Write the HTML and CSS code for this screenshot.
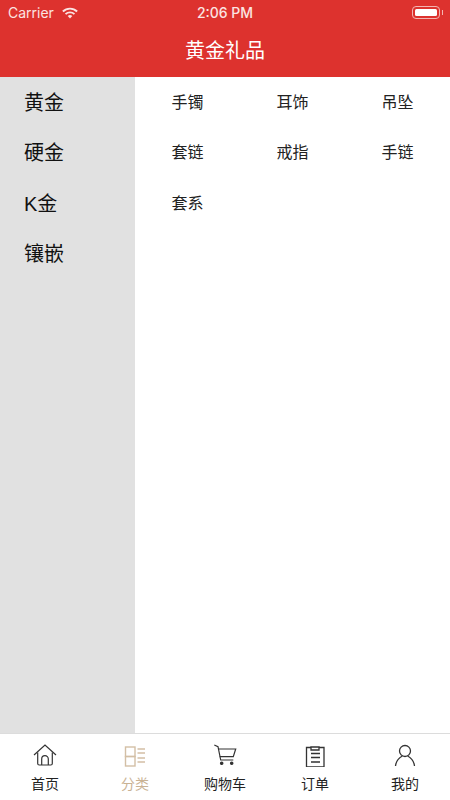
FILE: index.html
```html
<!DOCTYPE html>
<html lang="zh-CN">
<head>
  <meta charset="UTF-8" />
  <meta name="viewport" content="width=device-width, initial-scale=1.0" />
  <title>黄金礼品</title>
  <link rel="stylesheet" href="styles.css">
</head>
<body>
<div class="page">
  <header class="top">
    <div class="status">
      <div class="status__left">
        <span>Carrier</span>
        <svg class="status__wifi" viewBox="0 0 18 13" width="16" height="12">
          <path d="M1 4.8 A11.5 11.5 0 0 1 17 4.8" fill="none" stroke="#fbe4e2" stroke-width="2.2"/>
          <path d="M4 7.8 A7.3 7.3 0 0 1 14 7.8" fill="none" stroke="#fbe4e2" stroke-width="2.2"/>
          <path d="M6.4 10 A3.8 3.8 0 0 1 11.6 10 L9 12.8 Z" fill="#fbe4e2"/>
        </svg>
      </div>
      <div class="status__time">2:06 PM</div>
      <div class="status__right">
        <div class="battery"><div class="battery__fill"></div></div>
        <div class="battery__tip"></div>
      </div>
    </div>
    <h1 class="top__title">黄金礼品</h1>
  </header>

  <main class="main">
    <ul class="side">
      <li>黄金</li>
      <li>硬金</li>
      <li>K金</li>
      <li>镶嵌</li>
    </ul>
    <ul class="cats">
      <li>手镯</li>
      <li>耳饰</li>
      <li>吊坠</li>
      <li>套链</li>
      <li>戒指</li>
      <li>手链</li>
      <li>套系</li>
    </ul>
  </main>

  <nav class="tabs">
    <a class="tab">
      <svg viewBox="0 0 24 24" width="24" height="24" fill="none" stroke="#333" stroke-width="1.2">
        <path d="M1 12 L12 2 L23 12"/>
        <path d="M4.7 9.5 V20.5 Q4.7 22 6.2 22 H17.8 Q19.3 22 19.3 20.5 V9.5"/>
        <path d="M8.7 22 V16 A3.3 3.3 0 0 1 15.3 16 V22"/>
      </svg>
      <span>首页</span>
    </a>
    <a class="tab tab--on">
      <svg viewBox="0 0 24 24" width="24" height="24" fill="none" stroke="#d3bfa5" stroke-width="1.4">
        <rect x="2.5" y="4" width="9.5" height="9.5"/>
        <rect x="2.5" y="13.5" width="9.5" height="9.5"/>
        <path d="M14.5 6 H22 M14.5 10 H22 M14.5 15 H22 M14.5 19 H22"/>
      </svg>
      <span>分类</span>
    </a>
    <a class="tab">
      <svg viewBox="0 0 24 24" width="24" height="24" fill="none" stroke="#333" stroke-width="1.2">
        <path d="M1.3 2 L5 3.7 L7.7 17 H20.3"/>
        <path d="M5.3 6 H22.7 L20.3 13.7 H6.7"/>
        <circle cx="8.7" cy="20.3" r="1.2" fill="#333"/>
        <circle cx="18.7" cy="20.3" r="1.2" fill="#333"/>
      </svg>
      <span>购物车</span>
    </a>
    <a class="tab">
      <svg viewBox="0 0 24 24" width="24" height="24" fill="none" stroke="#333" stroke-width="1.3">
        <path d="M8 4.5 H3.5 V24 H21 V4.5 H16"/>
        <path d="M8 4 H16 V7 H8 Z"/>
        <path d="M8 10.5 H17 M8 14.5 H17 M8 19 H17"/>
      </svg>
      <span>订单</span>
    </a>
    <a class="tab">
      <svg viewBox="0 0 24 24" width="24" height="24" fill="none" stroke="#333" stroke-width="1.3">
        <circle cx="12" cy="8" r="5.5"/>
        <path d="M2.5 23 C3 18 6 14.8 9.3 13 M21.5 23 C21 18 18 14.8 14.7 13"/>
      </svg>
      <span>我的</span>
    </a>
  </nav>
</div>
</body>
</html>
```

FILE: styles.css
```css
* {
  box-sizing: border-box;
}
html, body {
  margin: 0;
  padding: 0;
}
body {
  font-family: "Liberation Sans", "Noto Sans CJK SC", sans-serif;
  color: #222;
}
ul {
  list-style: none;
  margin: 0;
  padding: 0;
}
.page {
  width: 450px;
  height: 800px;
  display: flex;
  flex-direction: column;
  overflow: hidden;
}
.top {
  height: 77px;
  background: #dd322e;
  color: #fff;
  flex-shrink: 0;
}
.status {
  height: 25px;
  padding: 0 7px 0 8px;
  display: flex;
  align-items: center;
  justify-content: space-between;
  position: relative;
  font-family: "Inter", "Liberation Sans", sans-serif;
  font-size: 14px;
  color: #fbe4e2;
}
.status__left {
  display: flex;
  align-items: center;
  gap: 8px;
}
.status__time {
  font-weight: 500;
  font-size: 14px;
  position: absolute;
  left: 0;
  right: 0;
  text-align: center;
}
.status__right {
  display: flex;
  align-items: center;
  gap: 2px;
}
.battery {
  width: 28px;
  height: 13px;
  border: 1px solid #f3b5b2;
  border-radius: 4px;
  padding: 2px;
}
.battery__fill {
  height: 100%;
  background: #fff;
  border-radius: 1.5px;
}
.battery__tip {
  width: 1.5px;
  height: 5px;
  background: #f3b5b2;
}
.top__title {
  margin: 0;
  height: 52px;
  line-height: 52px;
  text-align: center;
  font-size: 20px;
  font-weight: 400;
}
.main {
  flex: 1;
  display: flex;
  min-height: 0;
}
.side {
  width: 135px;
  background: #e1e1e1;
  padding: 1px 0 0 24px;
  font-size: 20px;
  color: #111;
}
.side li {
  height: 50.3px;
  line-height: 50px;
}
.cats {
  flex: 1;
  display: grid;
  grid-template-columns: repeat(3, 105px);
  grid-auto-rows: 50.3px;
  align-content: start;
  background: #fff;
  font-size: 16px;
  padding-top: 1px;
}
.cats li {
  line-height: 50px;
  text-align: center;
}
.tabs {
  height: 67px;
  flex-shrink: 0;
  background: #fff;
  border-top: 1px solid #dcdcdc;
  display: grid;
  grid-template-columns: repeat(5, 90px);
}
.tab {
  display: flex;
  flex-direction: column;
  align-items: center;
  padding-top: 9px;
  font-size: 14px;
  color: #222;
}
.tab span {
  line-height: 20px;
  margin-top: 7px;
}
.tab--on {
  color: #c9b294;
}
```
